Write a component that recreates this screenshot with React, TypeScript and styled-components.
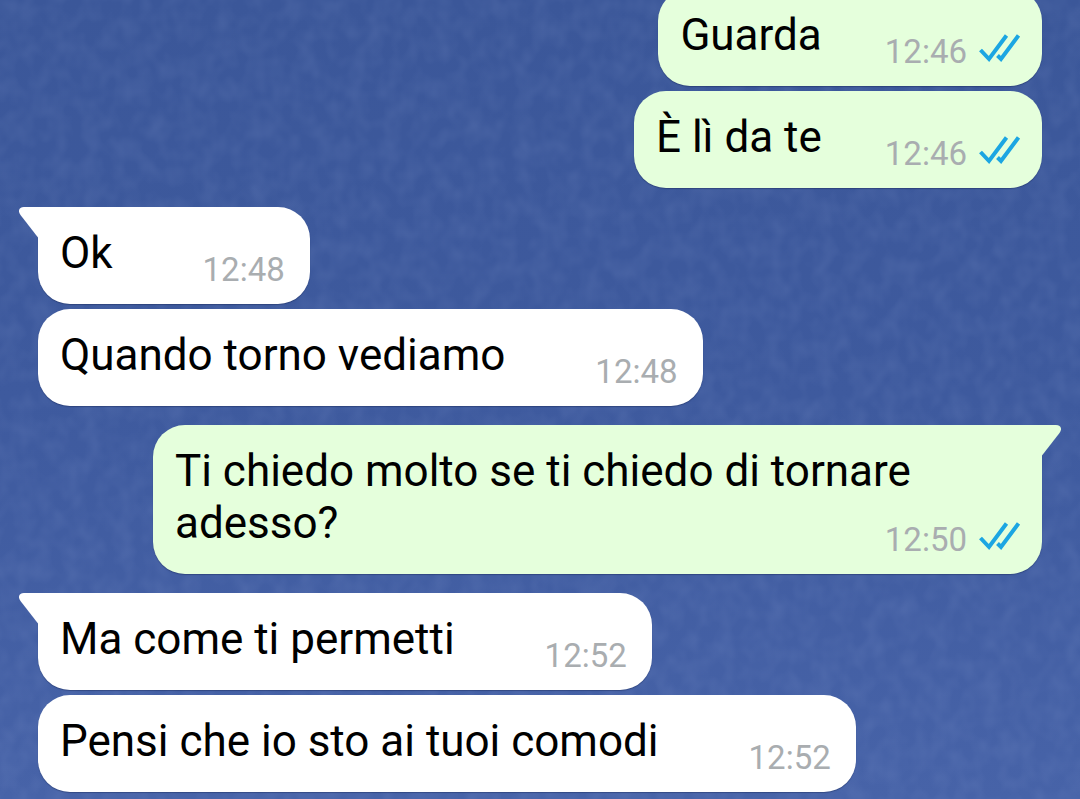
import React from "react";
import styled, { createGlobalStyle, css } from "styled-components";

type Side = "in" | "out";

interface Message {
  text: string;
  time: string;
  side: Side;
}

const groups: Message[][] = [
  [
    { text: "Guarda", time: "12:46", side: "out" },
    { text: "È lì da te", time: "12:46", side: "out" },
  ],
  [
    { text: "Ok", time: "12:48", side: "in" },
    { text: "Quando torno vediamo", time: "12:48", side: "in" },
  ],
  [{ text: "Ti chiedo molto se ti chiedo di tornare adesso?", time: "12:50", side: "out" }],
  [
    { text: "Ma come ti permetti", time: "12:52", side: "in" },
    { text: "Pensi che io sto ai tuoi comodi", time: "12:52", side: "in" },
  ],
];

const GlobalStyle = createGlobalStyle`
  body {
    margin: 0;
    background: #415c9f;
    font-family: Roboto, "Noto Sans", sans-serif;
  }
`;

const Screen = styled.main`
  position: relative;
  isolation: isolate;
  box-sizing: border-box;
  height: 100vh;
  overflow: hidden;
  display: flex;
  flex-direction: column;
  justify-content: flex-end;
  gap: 19px;
  padding: 0 38px 7px;
  background: linear-gradient(#3b5799, #3e5a9e 50%, #4763a8);
`;

const Wallpaper = styled.svg`
  position: absolute;
  inset: 0;
  z-index: -1;
  width: 100%;
  height: 100%;
`;

const Group = styled.section`
  display: flex;
  flex-direction: column;
  flex: none;
  gap: 5px;
`;

const Bubble = styled.article<{ $side: Side; $tail: boolean }>`
  position: relative;
  display: flow-root;
  box-sizing: border-box;
  padding: 20px 22px 14px;
  border-radius: 32px;
  color: #000;
  font-size: 44px;
  line-height: 52px;
  box-shadow: 0 1px 1px rgba(20, 35, 80, 0.4);
  ${({ $side, $tail }) =>
    $side === "out"
      ? css`
          align-self: flex-end;
          margin-left: 115px;
          background: #e5ffdc;
          border-top-right-radius: ${$tail ? 0 : 32}px;
        `
      : css`
          align-self: flex-start;
          margin-right: 115px;
          background: #fff;
          border-top-left-radius: ${$tail ? 0 : 32}px;
        `}
`;

const Tail = styled.svg<{ $side: Side }>`
  position: absolute;
  top: 0;
  width: 20px;
  height: 31px;
  ${({ $side }) =>
    $side === "out"
      ? css`
          right: -19px;
          transform: scaleX(-1);
          fill: #e5ffdc;
        `
      : css`
          left: -19px;
          fill: #fff;
        `}
`;

const Meta = styled.span<{ $side: Side }>`
  float: right;
  display: flex;
  align-items: flex-start;
  gap: 12px;
  margin: ${({ $side }) => ($side === "in" ? "23px 3px 0 90px" : "23px 0 0 63px")};
  color: #a9adb0;
  font-size: 33px;
  line-height: 40px;
`;

const Ticks = styled.svg`
  width: 41px;
  height: 34px;
  fill: none;
  stroke: #1ca6e2;
  stroke-width: 4;
`;

function ReadTicks() {
  return (
    <Ticks viewBox="0 0 41 34" role="img" aria-label="Letto">
      <path d="M1.5 18 10 27 27.5 3.5M18.5 23.5 22 27 39.5 3.5" />
    </Ticks>
  );
}

function MessageBubble({ message, tail }: { message: Message; tail: boolean }) {
  const { side, text, time } = message;
  return (
    <Bubble $side={side} $tail={tail}>
      {tail && (
        <Tail $side={side} viewBox="0 0 20 31" aria-hidden="true">
          <path d="M20 0H5C0 0-1.5 4 1.5 8L19 30.5H20Z" />
        </Tail>
      )}
      <span>{text}</span>
      <Meta $side={side}>
        <time>{time}</time>
        {side === "out" && <ReadTicks />}
      </Meta>
    </Bubble>
  );
}

export default function App() {
  return (
    <>
      <GlobalStyle />
      <Screen>
        <Wallpaper aria-hidden="true">
          <filter id="weave" x="0" y="0" width="100%" height="100%">
            <feTurbulence type="fractalNoise" baseFrequency="0.06 0.05" numOctaves="2" seed="8" />
            <feColorMatrix values="0 0 0 0 0.4  0 0 0 0 0.5  0 0 0 0 0.8  0.9 0 0 0 -0.3" />
          </filter>
          <rect width="100%" height="100%" filter="url(#weave)" opacity="0.2" />
        </Wallpaper>
        {groups.map((group, g) => (
          <Group key={g}>
            {group.map((message, i) => (
              <MessageBubble key={message.text} message={message} tail={g > 0 && i === 0} />
            ))}
          </Group>
        ))}
      </Screen>
    </>
  );
}
